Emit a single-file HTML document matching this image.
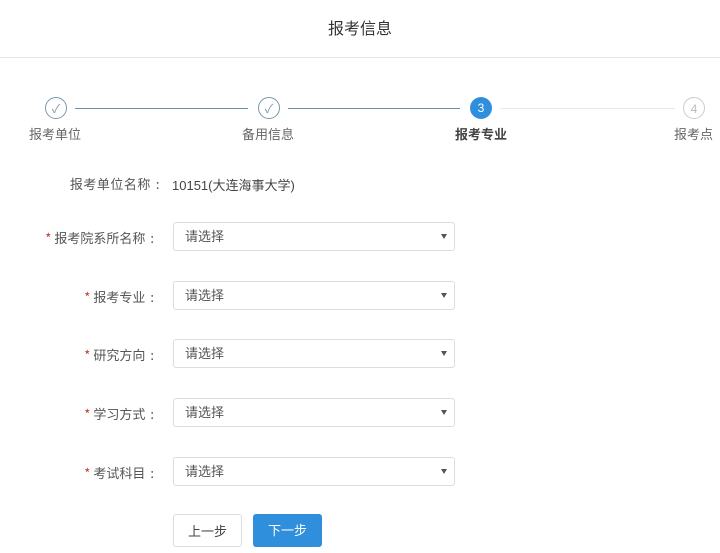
<!DOCTYPE html>
<html><head><meta charset="utf-8"><style>
body{margin:0;width:720px;height:553px;background:#fff;font-family:"Liberation Sans","Noto Sans CJK SC",sans-serif;position:relative;overflow:hidden;color:#555}
.hdr{position:absolute;left:0;top:0;width:720px;height:57px;border-bottom:1px solid #e5e5e5;text-align:center;line-height:60px;font-size:16px;color:#333}
.c{position:absolute;width:22px;height:22px;border-radius:50%;box-sizing:border-box;text-align:center;line-height:22px;font-size:12px;top:97px}
.ln{position:absolute;height:1px;top:108px}
.lb{position:absolute;top:124px;font-size:13px;color:#666;white-space:nowrap}
.lab{position:absolute;right:566px;font-size:13px;color:#555;white-space:nowrap;text-align:right;font-family:"Noto Sans CJK SC",sans-serif;line-height:18px}
.lab i{color:#c0392b;font-style:normal;margin-right:3px}
.lab b{font-weight:normal;margin-left:5px}
.sel{position:absolute;left:173px;width:282px;height:29px;border:1px solid #ddd;border-radius:3px;box-sizing:border-box;font-size:13px;color:#555;padding-left:11px;line-height:27px}
.sel:after{content:"";position:absolute;right:7px;top:11px;border-left:3px solid transparent;border-right:3px solid transparent;border-top:5px solid #555}
.btn{position:absolute;top:514px;width:69px;height:33px;border-radius:3px;box-sizing:border-box;font-size:13px;text-align:center;line-height:33px}
</style></head><body>
<div class="hdr">报考信息</div>
<div class="c" style="left:45px;border:1px solid #7a97a8;color:#7a97a8">✓</div>
<div class="ln" style="left:75px;width:173px;background:#6c8fa6"></div>
<div class="c" style="left:258px;border:1px solid #7a97a8;color:#7a97a8">✓</div>
<div class="ln" style="left:288px;width:172px;background:#6c8fa6"></div>
<div class="c" style="left:470px;background:#2f8fdc;color:#fff">3</div>
<div class="ln" style="left:500px;width:175px;background:#e8e8e8"></div>
<div class="c" style="left:683px;border:1px solid #ccc;color:#bbb">4</div>
<div class="lb" style="left:29px">报考单位</div>
<div class="lb" style="left:242px">备用信息</div>
<div class="lb" style="left:455px;color:#444;font-weight:bold">报考专业</div>
<div class="lb" style="left:674px">报考点</div>
<div class="lab" style="top:175px;right:560px;letter-spacing:0.5px">报考单位名称<b>:</b></div>
<div style="position:absolute;left:172px;top:175px;font-size:13px;color:#444">10151(大连海事大学)</div>
<div class="lab" style="top:229px"><i>*</i>报考院系所名称<b>:</b></div>
<div class="sel" style="top:222px">请选择</div>
<div class="lab" style="top:288px"><i>*</i>报考专业<b>:</b></div>
<div class="sel" style="top:281px">请选择</div>
<div class="lab" style="top:346px"><i>*</i>研究方向<b>:</b></div>
<div class="sel" style="top:339px">请选择</div>
<div class="lab" style="top:405px"><i>*</i>学习方式<b>:</b></div>
<div class="sel" style="top:398px">请选择</div>
<div class="lab" style="top:464px"><i>*</i>考试科目<b>:</b></div>
<div class="sel" style="top:457px">请选择</div>
<div class="btn" style="left:173px;border:1px solid #ddd;color:#444">上一步</div>
<div class="btn" style="left:253px;background:#2f8fdc;color:#fff">下一步</div>
</body></html>
